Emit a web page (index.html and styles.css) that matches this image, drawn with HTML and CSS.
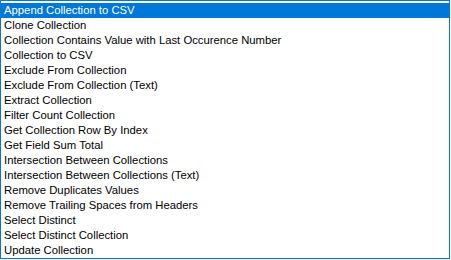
FILE: index.html
```html
<!DOCTYPE html>
<html>
<head>
<meta charset="utf-8">
<link rel="stylesheet" href="styles.css">
</head>
<body>
<ul class="listbox">
  <li class="item selected">Append Collection to CSV</li>
  <li class="item">Clone Collection</li>
  <li class="item">Collection Contains Value with Last Occurence Number</li>
  <li class="item">Collection to CSV</li>
  <li class="item">Exclude From Collection</li>
  <li class="item">Exclude From Collection (Text)</li>
  <li class="item">Extract Collection</li>
  <li class="item">Filter Count Collection</li>
  <li class="item">Get Collection Row By Index</li>
  <li class="item">Get Field Sum Total</li>
  <li class="item">Intersection Between Collections</li>
  <li class="item">Intersection Between Collections (Text)</li>
  <li class="item">Remove Duplicates Values</li>
  <li class="item">Remove Trailing Spaces from Headers</li>
  <li class="item">Select Distinct</li>
  <li class="item">Select Distinct Collection</li>
  <li class="item">Update Collection</li>
</ul>
</body>
</html>
```
FILE: styles.css
```css
html, body {
  margin: 0;
  padding: 0;
  background: #ffffff;
}
.listbox {
  list-style: none;
  margin: 0;
  padding: 2px 0 0 0;
  width: 448px;
  height: 255px;
  border: 1px solid #0078d7;
  font-family: "Liberation Sans", Arial, sans-serif;
  font-size: 11.3px;
  color: #000000;
  display: flex;
  flex-direction: column;
}
.item {
  height: 15px;
  line-height: 15px;
  padding-left: 3px;
  white-space: nowrap;
}
.selected {
  background: #0078d7;
  color: #ffffff;
}
```
